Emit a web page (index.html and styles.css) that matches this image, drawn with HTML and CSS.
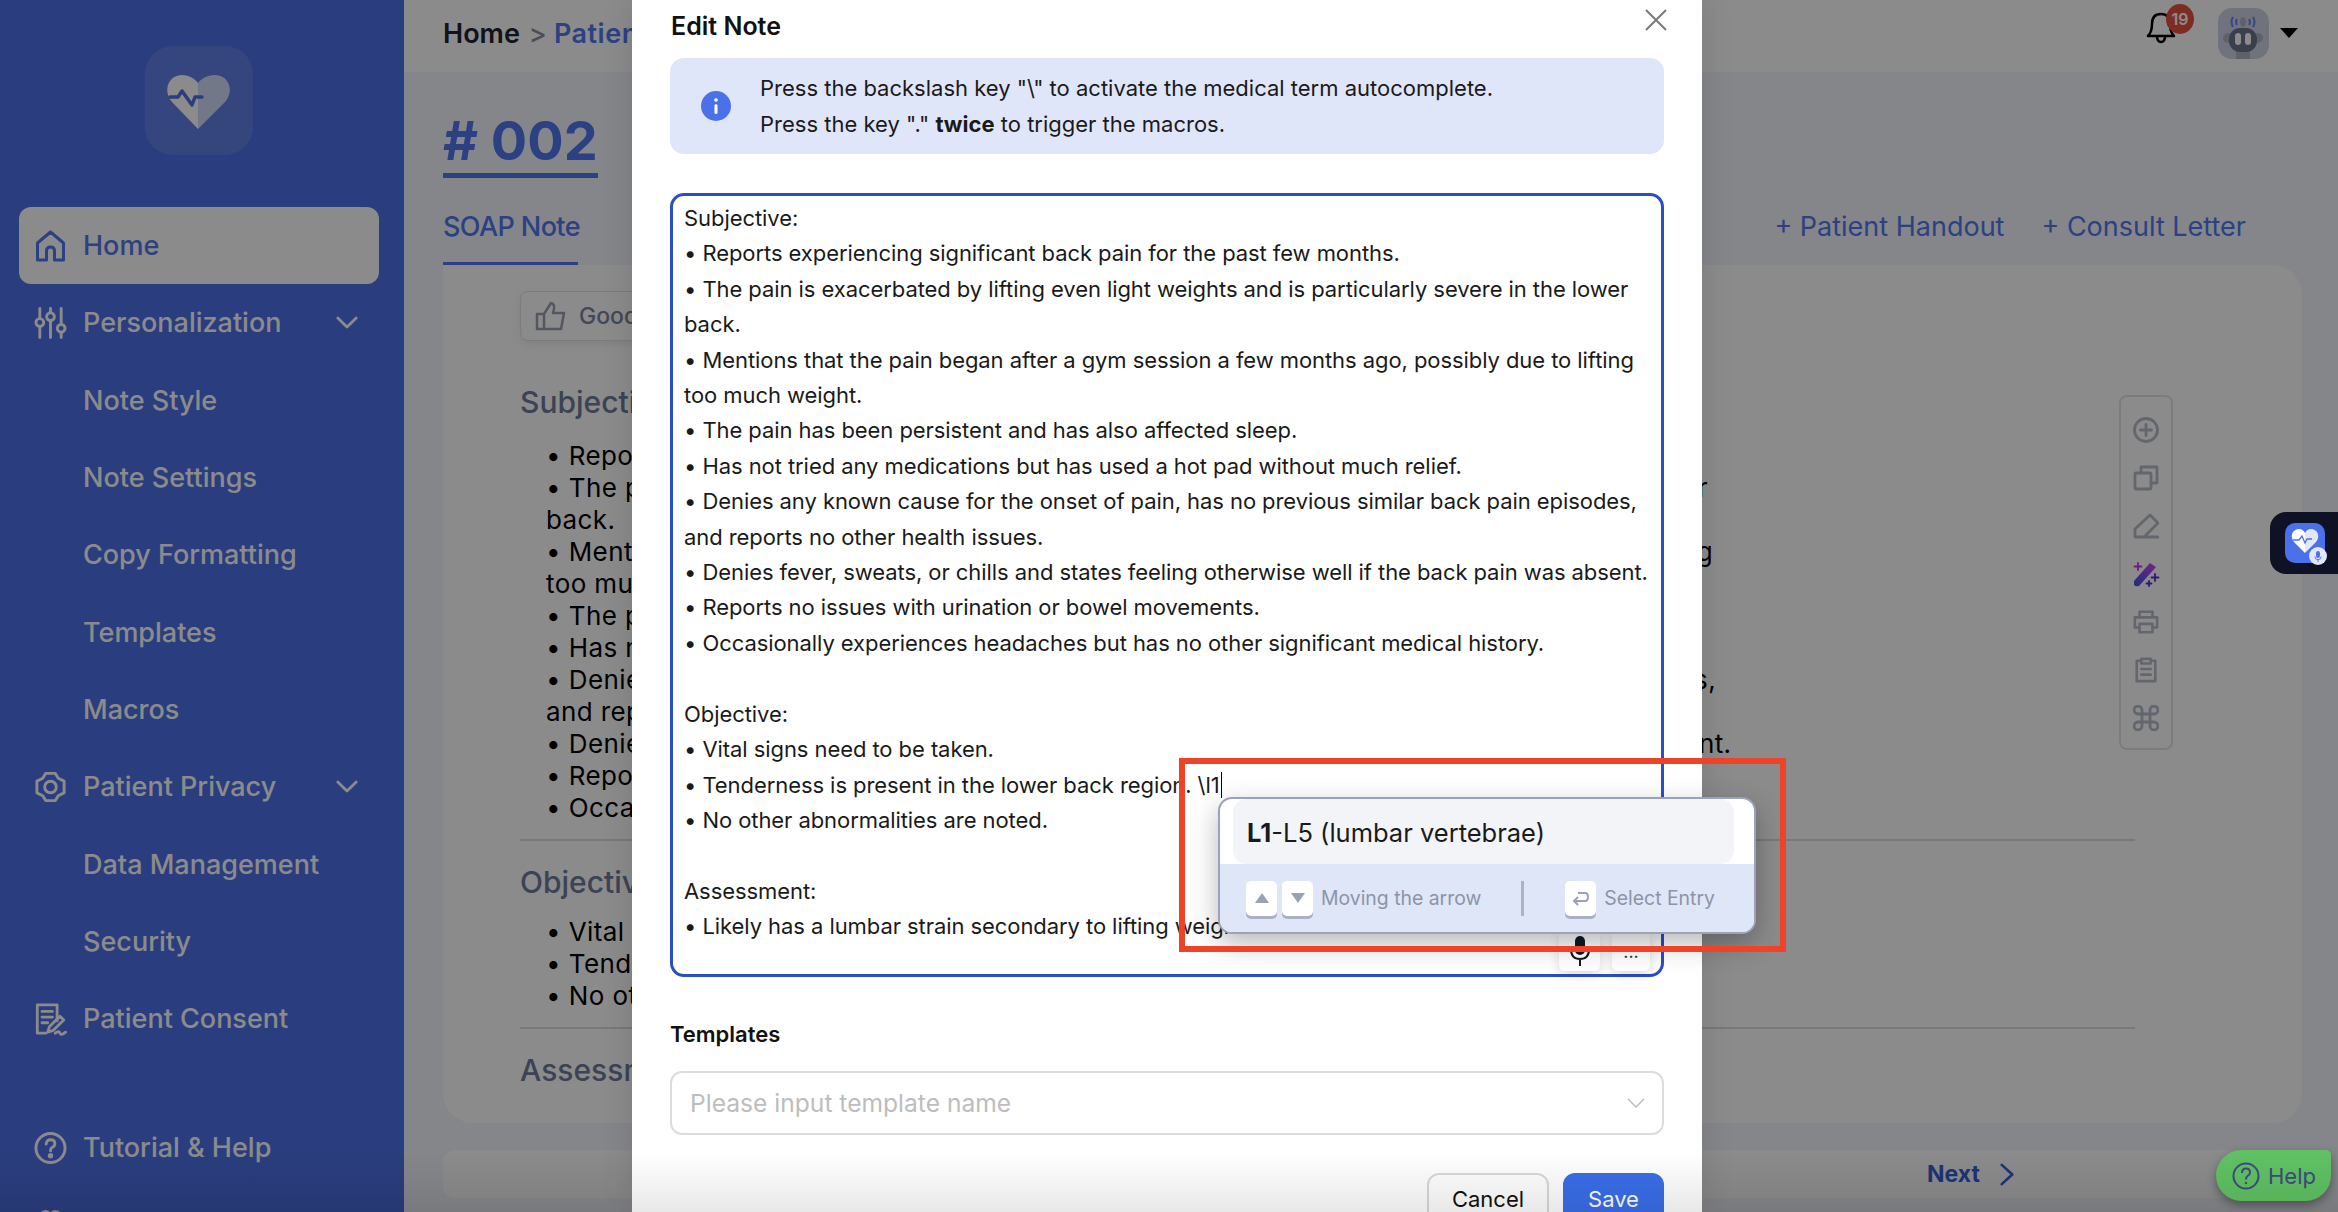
FILE: index.html
```html
<!DOCTYPE html>
<html lang="en">
<head>
<meta charset="utf-8">
<title>Edit Note</title>
<link rel="stylesheet" href="styles.css">
</head>
<body>
<div class="app">
  <aside class="sidebar">
    <div class="logo">
      <svg viewBox="0 0 108 108" width="108" height="108">
        <path fill="#fff" d="M53 83 L27 56 C17 44 24 29 37 29 C44 29 50 33 53 37 Z"/>
        <path fill="#fff" opacity=".72" d="M53 83 L80 56 C90 44 83 29 70 29 C62 29 56 33 53 37 Z"/>
        <path fill="none" stroke="#4d70e8" stroke-width="3.500" stroke-linejoin="round" stroke-linecap="round" d="M25 51 H33 L37 45 L47 59 L50 51 H57"/>
      </svg>
    </div>
    <nav class="nav">
      <a class="nav-item active">
        <svg class="nav-icon" viewBox="0 0 32 34"><path d="M3 14 L16 3 L29 14 V31 H20 V22 Q20 18 16 18 Q12 18 12 22 V31 H3 Z"/></svg>
        <span>Home</span>
      </a>
      <a class="nav-item">
        <svg class="nav-icon" viewBox="0 0 34 34"><path d="M6 2 V12 M6 21 V32 M17 2 V6 M17 15 V32 M28 2 V18 M28 27 V32"/><circle cx="6" cy="16.500" r="4"/><circle cx="17" cy="10.500" r="4"/><circle cx="28" cy="22.500" r="4"/></svg>
        <span class="nav-label">Personalization</span>
        <svg class="chev" viewBox="0 0 24 14"><path d="M2 2 L12 12 L22 2"/></svg>
      </a>
      <a class="nav-item sub">Note Style</a>
      <a class="nav-item sub">Note Settings</a>
      <a class="nav-item sub">Copy Formatting</a>
      <a class="nav-item sub">Templates</a>
      <a class="nav-item sub">Macros</a>
      <a class="nav-item">
        <svg class="nav-icon" viewBox="0 0 34 34"><path d="M12 3 H22 L25 8 L31 11 V23 L25 26 L22 31 H12 L9 26 L3 23 V11 L9 8 Z" stroke-linejoin="round"/><circle cx="17" cy="17" r="6"/></svg>
        <span class="nav-label">Patient Privacy</span>
        <svg class="chev" viewBox="0 0 24 14"><path d="M2 2 L12 12 L22 2"/></svg>
      </a>
      <a class="nav-item sub">Data Management</a>
      <a class="nav-item sub">Security</a>
      <a class="nav-item">
        <svg class="nav-icon" viewBox="0 0 34 36"><path d="M24 20 V3 H3 V33 H12 M8 10 H19 M8 16 H19 M8 22 H14"/><path d="M14 32 L16 26 L27 15 L31 19 L20 30 Z M22 33 Q26 30 27 33 T33 32"/></svg>
        <span>Patient Consent</span>
      </a>
      <a class="nav-item tutorial">
        <svg class="nav-icon" viewBox="0 0 34 34"><circle cx="17" cy="17" r="15"/><path d="M12.500 13 Q13 8.500 17 8.500 Q21.500 8.500 21.500 12.500 Q21.500 15 18.500 16.500 Q17 17.500 17 20"/><circle class="dot" cx="17" cy="25" r="1.300"/></svg>
        <span>Tutorial &amp; Help</span>
      </a>
      <a class="nav-item">
        <svg class="nav-icon" viewBox="0 0 34 34"><circle cx="12" cy="8" r="5"/><circle cx="22" cy="8" r="5"/><path d="M4 30 Q4 18 17 18 Q30 18 30 30"/></svg>
        <span>Referral</span>
      </a>
    </nav>
  </aside>

  <main class="main">
    <header class="topbar">
      <div class="crumbs"><span class="crumb-home">Home</span><span class="crumb-sep">&gt;</span><span class="crumb-cur">Patient Notes</span></div>
      <div class="top-actions">
        <div class="bell">
          <svg viewBox="0 0 32 34" width="32" height="34"><path d="M3 26 Q7 22 7 14 Q7 4 16 4 Q25 4 25 14 Q25 22 29 26 Z M12 26 Q12 32 16 32 Q20 32 20 26"/></svg>
          <span class="bell-count">19</span>
        </div>
        <div class="avatar">
          <svg viewBox="0 0 50 51" width="50" height="51">
            <path d="M15 9 Q12 14 15 19 M19 11 Q17 14 19 17 M35 9 Q38 14 35 19 M31 11 Q33 14 31 17" fill="none" stroke="#5b86ff" stroke-width="2"/>
            <ellipse cx="25" cy="14" rx="3" ry="5" fill="#aeb3c0"/>
            <rect x="18" y="42" width="14" height="9" fill="#aeb3c0"/>
            <circle cx="10" cy="30" r="5" fill="#aeb3c0"/><circle cx="40" cy="30" r="5" fill="#aeb3c0"/>
            <rect x="11" y="20" width="28" height="24" rx="11" fill="#6b7590"/>
            <rect x="17" y="25" width="6" height="12" rx="3" fill="#fff"/><rect x="27" y="25" width="6" height="12" rx="3" fill="#fff"/>
          </svg>
        </div>
        <span class="caret"></span>
      </div>
    </header>

    <div class="content">
      <h1 class="doc-id"># 002</h1>
      <div class="tabs">
        <span class="tab active">SOAP Note</span>
        <span class="tab-add">+ Patient Handout</span>
        <span class="tab-add">+ Consult Letter</span>
      </div>
      <section class="card">
        <div class="rate">
          <svg viewBox="0 0 32 30" width="32" height="30"><path d="M9 13 H2 V28 H9 Z M9 13 L16 2 Q20 3 19 8 L18 12 H29 L26 28 H9"/></svg>
          <span>Good note</span>
        </div>
        <h2 class="sec-title first">Subjective</h2>
        <div class="sec-body lead">• Reports experiencing significant back pain for the past few months.<br>• The pain is exacerbated by lifting even light weights and is particularly severe in the lower<br>back.<br>• Mentions that the pain began after a gym session a few months ago, possibly due to lifting<br>too much weight.<br>• The pain has been persistent and has also affected sleep.<br>• Has not tried any medications but has used a hot pad without much relief.<br>• Denies any known cause for the onset of pain, has no previous similar back pain episodes,<br>and reports no other health issues.<br>• Denies fever, sweats, or chills and states feeling otherwise well if the back pain was absent.<br>• Reports no issues with urination or bowel movements.<br>• Occasionally experiences headaches but has no other significant medical history.</div>
        <hr class="sec-rule">
        <h2 class="sec-title">Objective</h2>
        <div class="sec-body">• Vital signs need to be taken.<br>• Tenderness is present in the lower back region.<br>• No other abnormalities are noted.</div>
        <hr class="sec-rule">
        <h2 class="sec-title">Assessment</h2>
        <div class="toolbar">
          <svg viewBox="0 0 26 26"><circle cx="13" cy="13" r="11.500"/><path d="M13 7.500 V18.500 M7.500 13 H18.500"/></svg>
          <svg viewBox="0 0 26 26"><rect x="2" y="8" width="16" height="16" rx="1"/><path d="M8 8 V2 H24 V18 H18"/></svg>
          <svg viewBox="0 0 26 26"><path d="M2 24 V16 L17 2 L25 10 L11 24 H25 M2 24 H11"/></svg>
          <svg viewBox="0 0 28 26" class="wand"><defs><linearGradient id="wg" x1="0" y1="1" x2="1" y2="0"><stop offset="0" stop-color="#3b52e8"/><stop offset="1" stop-color="#e040ff"/></linearGradient></defs><path fill="url(#wg)" stroke="none" d="M2 20 L18 2 L24 6 L7 25 Q4 26 2 24 Z"/><path stroke="#b93be0" d="M6 2 V9 M2.500 5.500 H9.500"/><path stroke="#5a2bd8" d="M23 13 V20 M19.500 16.500 H26.500 M17 20 V25 M14.500 22.500 H19.500"/></svg>
          <svg viewBox="0 0 28 26"><path d="M7 8 V2 H21 V8 M7 19 H2 V8 H26 V19 H21"/><rect x="7" y="15" width="14" height="9"/></svg>
          <svg viewBox="0 0 26 28"><path d="M8 4 H3 V26 H23 V4 H18 M8 2 H18 V7 H8 Z M8 13 H18 M8 19 H18"/></svg>
          <svg viewBox="0 0 26 26"><path d="M9 9 V5 A4 4 0 1 0 5 9 H21 A4 4 0 1 0 17 5 V21 A4 4 0 1 0 21 17 H5 A4 4 0 1 0 9 21 Z"/></svg>
        </div>
      </section>
      <div class="pager"><span class="pager-next">Next</span><svg viewBox="0 0 16 26" width="14" height="25"><path d="M2 2 L14 13 L2 24"/></svg></div>
    </div>
  </main>
</div>

<div class="mask"></div>

<div class="modal">
  <div class="modal-head">
    <span class="modal-title">Edit Note</span>
    <svg class="modal-close" viewBox="0 0 22 22" width="22" height="22"><path d="M1 1 L21 21 M21 1 L1 21"/></svg>
  </div>
  <div class="alert">
    <svg class="alert-icon" viewBox="0 0 30 30" width="30" height="30"><circle cx="15" cy="15" r="15" fill="#4a70ea"/><circle cx="15" cy="9" r="1.800" fill="#fff"/><rect x="13.500" y="13" width="3" height="10" rx="1.500" fill="#fff"/></svg>
    <div class="alert-text">Press the backslash key "\" to activate the medical term autocomplete.<br>Press the key "." <b>twice</b> to trigger the macros.</div>
  </div>
  <div class="editor">
    <div class="editor-text">Subjective:<br>• Reports experiencing significant back pain for the past few months.<br>• The pain is exacerbated by lifting even light weights and is particularly severe in the lower<br>back.<br>• Mentions that the pain began after a gym session a few months ago, possibly due to lifting<br>too much weight.<br>• The pain has been persistent and has also affected sleep.<br>• Has not tried any medications but has used a hot pad without much relief.<br>• Denies any known cause for the onset of pain, has no previous similar back pain episodes,<br>and reports no other health issues.<br>• Denies fever, sweats, or chills and states feeling otherwise well if the back pain was absent.<br>• Reports no issues with urination or bowel movements.<br>• Occasionally experiences headaches but has no other significant medical history.<br><br>Objective:<br>• Vital signs need to be taken.<br>• Tenderness is present in the lower back region. <span class="caret-text">\l1</span><br>• No other abnormalities are noted.<br><br>Assessment:<br>• Likely has a lumbar strain secondary to lifting weights</div>
    <div class="editor-tools">
      <span class="tool-btn"><svg viewBox="0 0 22 32" width="22" height="32"><rect x="6" y="1" width="10" height="19" rx="5" fill="#111827"/><path d="M2 14 Q2 24 11 24 Q20 24 20 14 M11 24 V31" fill="none" stroke="#111827" stroke-width="2"/></svg></span>
      <span class="tool-btn dots">...</span>
    </div>
  </div>
  <div class="field-label">Templates</div>
  <div class="select">
    <span>Please input template name</span>
    <svg viewBox="0 0 18 10" width="18" height="10"><path d="M1 1 L9 9 L17 1"/></svg>
  </div>
  <div class="modal-actions">
    <span class="btn">Cancel</span>
    <span class="btn primary">Save</span>
  </div>
</div>

<div class="popup">
  <div class="popup-row"><b>L1</b>-L5 (lumbar vertebrae)</div>
  <div class="popup-foot">
    <span class="key"><svg viewBox="0 0 14 10" width="14" height="10"><path d="M7 0 L14 10 H0 Z"/></svg></span>
    <span class="key"><svg viewBox="0 0 14 10" width="14" height="10"><path d="M0 0 H14 L7 10 Z"/></svg></span>
    <span class="hint">Moving the arrow</span>
    <span class="foot-sep"></span>
    <span class="key"><svg class="enter" viewBox="0 0 18 16" width="18" height="16"><path d="M6 3 H13 Q16 3 16 7 Q16 11 13 11 H2 M6 7 L2 11 L6 15"/></svg></span>
    <span class="hint">Select Entry</span>
  </div>
</div>
<div class="callout"></div>

<div class="widget">
  <div class="widget-icon">
    <svg viewBox="0 0 40 40" width="40" height="40"><path fill="#fff" d="M20 30 L9 19 C4 13 8 6 14 6 C17 6 19 8 20 10 Z"/><path fill="#e2e8fb" d="M20 30 L31 19 C36 13 32 6 26 6 C23 6 21 8 20 10 Z"/><path fill="none" stroke="#4a70ea" stroke-width="1.300" d="M8 17 H14 L17 13 L20 20 L22 16 H27"/></svg>
    <span class="widget-badge"><svg viewBox="0 0 10 14" width="10" height="14"><rect x="2.500" y="0" width="5" height="9" rx="2.500" fill="#4a70ea"/><path d="M1 7 Q1 11 5 11 Q9 11 9 7 M5 11 V14" fill="none" stroke="#4a70ea" stroke-width="1.200"/></svg></span>
  </div>
</div>

<div class="help">
  <svg viewBox="0 0 28 28" width="28" height="28"><circle cx="14" cy="14" r="12.500"/><path d="M10 11 Q10 6.500 14 6.500 Q18 6.500 18 10.500 Q18 12.500 15.500 14 Q14 15 14 17.500"/><circle class="dot" cx="14" cy="21" r="1.200"/></svg>
  <span>Help</span>
</div>
<div class="bottom-fade"></div>
</body>
</html>
```

FILE: styles.css
```css
* { box-sizing: border-box; }
html, body { margin: 0; height: 100%; }
body {
  position: relative;
  width: 2338px;
  height: 1212px;
  overflow: hidden;
  font-family: Inter, "Liberation Sans", sans-serif;
  color: #000;
}
h1, h2 { margin: 0; }

/* page behind the dialog */
.app { display: flex; height: 1212px; overflow: hidden; }
.sidebar { flex: 0 0 404px; background: #4d70e8; overflow: hidden; }
.logo { width: 108px; height: 109px; margin: 46px 0 52px 145px; border-radius: 28px; background: rgba(255,255,255,.12); }
.logo svg { display: block; }
.nav { display: flex; flex-direction: column; }
.nav-item {
  display: flex;
  align-items: center;
  flex: 0 0 77.300px;
  height: 77.300px;
  margin: 0 25px 0 19px;
  padding-left: 15px;
  gap: 16px;
  font-size: 27px;
  font-weight: 500;
  color: #fff;
  border-radius: 12px;
}
.nav-item.sub { padding-left: 64px; }
.nav-item.active { background: #fff; color: #4f78f0; }
.nav-item.tutorial { margin-top: 52px; }
.nav-icon { width: 33px; height: 34px; flex: none; fill: none; stroke: currentColor; stroke-width: 3; stroke-linecap: round; stroke-linejoin: round; }
.nav-icon .dot { fill: currentColor; }
.nav-label { flex: 1; }
.chev { width: 22px; height: 13px; margin-right: 21px; fill: none; stroke: currentColor; stroke-width: 3; stroke-linecap: round; stroke-linejoin: round; }

.main { flex: 1; min-width: 0; background: #f4f6fd; display: flex; flex-direction: column; }
.topbar { flex: 0 0 72px; background: #fff; display: flex; align-items: center; justify-content: space-between; padding: 0 40px 6px 39px; }
.crumbs { display: flex; align-items: center; font-size: 27px; font-weight: 600; white-space: nowrap; }
.crumb-home { color: #1f2430; }
.crumb-sep { color: #8a8f9c; margin: 0 7px 0 9px; font-weight: 500; }
.crumb-cur { color: #4f78f0; letter-spacing: .5px; }
.top-actions { display: flex; align-items: center; }
.bell { position: relative; width: 32px; height: 34px; margin: -12px 41px 0 0; }
.bell svg { display: block; fill: none; stroke: #000; stroke-width: 2.500; stroke-linejoin: round; }
.bell-count { position: absolute; left: 21px; top: -6px; width: 28px; height: 30px; border-radius: 50%; background: #e8503e; color: #fff; font-size: 16px; font-weight: 600; display: flex; align-items: center; justify-content: center; }
.avatar { width: 51px; height: 51px; border-radius: 14px; background: #ced4e4; overflow: hidden; margin-right: 11px; }
.avatar svg { display: block; }
.caret { width: 0; height: 0; border-left: 9px solid transparent; border-right: 9px solid transparent; border-top: 10px solid #000; }

.content { flex: 1; padding: 0 36px 0 39px; display: flex; flex-direction: column; }
.doc-id { align-self: flex-start; margin-top: 36px; height: 70px; font-size: 54px; line-height: 66px; font-weight: 700; color: #4f78f0; border-bottom: 5px solid #4f78f0; }
.tabs { display: flex; align-items: flex-start; height: 87px; padding-top: 21px; font-size: 27px; }
.tab.active { color: #4f78f0; font-weight: 500; height: 66px; line-height: 56px; border-bottom: 3px solid #4f78f0; width: 135px; white-space: nowrap; letter-spacing: -.6px; }
.tab-add { color: #4f78f0; font-weight: 400; line-height: 56px; white-space: nowrap; }
.tab.active + .tab-add { margin-left: auto; }
.tab-add + .tab-add { margin-left: 37px; margin-right: 56px; }
.card { position: relative; height: 858px; background: #fff; border-radius: 0 30px 30px 30px; padding: 26px 170px 0 77px; }
.rate { display: flex; align-items: center; gap: 12px; width: 220px; height: 50px; padding-left: 14px; border: 1.500px solid #dfe2ea; border-radius: 8px; box-shadow: 0 3px 8px rgba(0,0,0,.08); font-size: 23px; font-weight: 500; color: #7c8599; white-space: nowrap; }
.rate svg { fill: none; stroke: #99a0b0; stroke-width: 2.500; stroke-linejoin: round; flex: none; }
.sec-title { font-size: 30px; line-height: 40px; font-weight: 500; color: #6e7b9a; }
.sec-title.first { margin-top: 41px; }
.sec-body { margin: 14px 0 0 26px; font-size: 26px; letter-spacing: .4px; line-height: 32px; white-space: nowrap; color: #000; }
.sec-body.lead { margin-top: 18px; }
.sec-rule { border: 0; border-top: 2px solid #d9dce4; margin: 15px 0 0; width: 1615px; }
.sec-rule + .sec-title { margin-top: 21px; }
.toolbar { position: absolute; left: 1676px; top: 130px; width: 54px; height: 355px; padding-top: 20px; border: 2px solid #e2e4ea; border-radius: 8px; display: flex; flex-direction: column; align-items: center; gap: 22px; }
.toolbar svg { width: 26px; height: 26px; flex: none; fill: none; stroke: #b6bbc8; stroke-width: 2.800; stroke-linejoin: round; stroke-linecap: round; }
.toolbar .wand { width: 30px; stroke-width: 1.800; }
.pager { height: 48px; margin-top: 27px; width: 1859px; background: #fff; border-radius: 12px; display: flex; align-items: center; padding-left: 1484px; gap: 20px; }
.pager-next { font-size: 23px; font-weight: 700; color: #365fd8; }
.pager svg { fill: none; stroke: #365fd8; stroke-width: 3; stroke-linecap: round; stroke-linejoin: round; }

.mask { position: absolute; inset: 0; background: rgba(0,0,0,.455); }

/* dialog */
.modal { position: absolute; left: 632px; top: 0; width: 1070px; height: 1212px; background: #fff; padding: 0 38px; overflow: hidden; box-shadow: 0 0 30px rgba(0,0,0,.12); }
.modal-head { display: flex; justify-content: space-between; height: 58px; padding: 9px 0 0 1px; }
.modal-title { font-size: 25px; line-height: 34px; font-weight: 600; color: #111; }
.modal-close { margin-right: -3px; fill: none; stroke: #7a7a7a; stroke-width: 2; }
.alert { display: flex; align-items: center; height: 96px; padding-left: 31px; gap: 29px; background: #e0e6fa; border-radius: 14px; }
.alert-icon { flex: none; }
.alert-text { font-size: 22px; line-height: 36px; color: #1a1a1a; white-space: nowrap; }
.alert-text b { font-weight: 700; }
.editor { position: relative; margin-top: 39px; height: 784px; border: 3px solid #2a4fc4; border-radius: 14px; padding: 5px 11px 0; }
.editor-text { font-size: 22px; letter-spacing: -.07px; line-height: 35.400px; color: #1a1a1a; white-space: nowrap; }
.caret-text { border-right: 1.500px solid #000; padding-right: 1px; }
.editor-tools { position: absolute; right: 11px; bottom: 3px; display: flex; gap: 12px; }
.tool-btn { width: 41px; height: 40px; border-radius: 6px; background: #fff; box-shadow: 0 4px 12px rgba(0,0,0,.14); display: flex; align-items: center; justify-content: center; }
.tool-btn.dots { width: 38px; font-size: 18px; color: #333; }
.field-label { margin-top: 40px; font-size: 22px; line-height: 34px; font-weight: 600; color: #111; }
.select { margin-top: 20px; height: 64px; border: 2px solid #dcdcdc; border-radius: 12px; display: flex; align-items: center; justify-content: space-between; padding: 0 17px 0 18px; font-size: 24.600px; color: #bdbdbd; }
.select svg { fill: none; stroke: #bdbdbd; stroke-width: 1.500; }
.modal-actions { display: flex; justify-content: flex-end; gap: 14px; margin-top: 38px; }
.btn { display: flex; align-items: center; justify-content: center; width: 122px; height: 52px; border: 2px solid #d9d9d9; border-radius: 12px; font-size: 22px; color: #111; background: #fff; }
.btn.primary { width: 101px; background: #3a6ee8; border-color: #3a6ee8; color: #fff; }

/* autocomplete */
.popup { position: absolute; left: 1218px; top: 797px; width: 538px; height: 137px; background: #fff; border: 2px solid #9aa3b8; border-radius: 14px; overflow: hidden; box-shadow: 0 10px 28px rgba(0,0,0,.28); display: flex; flex-direction: column; }
.popup-row { flex: 0 0 65px; margin: 0 20px 0 13px; padding: 2px 0 0 14px; display: flex; align-items: center; white-space: pre; background: #f3f4f8; border-radius: 14px; font-size: 25.500px; color: #1a1a1a; }
.popup-row b { font-weight: 700; }
.popup-foot { flex: 1; background: #dfe6f8; display: flex; align-items: center; padding-left: 26px; font-size: 19.400px; color: #8c94a8; }
.key { flex: none; width: 31px; height: 35px; margin-right: 5px; background: #fff; border-radius: 5px; box-shadow: 0 3px 0 #aab1c2; display: flex; align-items: center; justify-content: center; }
.key svg { fill: #9aa2b4; }
.key .enter { fill: none; stroke: #9aa2b4; stroke-width: 2; }
.hint { white-space: nowrap; margin-left: 3px; }
.foot-sep { width: 3px; height: 35px; margin: 0 41px 0 40px; background: #aab3c8; }
.callout { position: absolute; left: 1179px; top: 758px; width: 607px; height: 194px; border: 6px solid #ee4326; }

/* floating */
.widget { position: absolute; left: 2270px; top: 512px; width: 68px; height: 62px; background: #0f1224; border-radius: 16px 0 0 16px; padding: 11px 0 0 15px; }
.widget-icon { position: relative; width: 40px; height: 40px; background: #4a70ea; border-radius: 10px; }
.widget-icon svg { display: block; }
.widget-badge { position: absolute; right: -2px; bottom: -2px; width: 18px; height: 18px; border-radius: 50%; background: #e2e8fb; display: flex; align-items: center; justify-content: center; }
.widget-badge svg { width: 8px; height: 11px; }
.help { position: absolute; left: 2216px; top: 1150px; width: 115px; height: 51px; background: #5fc163; border-radius: 26px 5px 26px 26px; display: flex; align-items: center; padding-left: 16px; gap: 8px; font-size: 22px; color: #3f4a80; box-shadow: 0 4px 10px rgba(0,0,0,.35); }
.help svg { fill: none; stroke: #3f4a80; stroke-width: 2; flex: none; }
.help .dot { fill: #3f4a80; stroke: none; }
.bottom-fade { position: absolute; left: 0; right: 0; bottom: 0; height: 60px; background: linear-gradient(rgba(0,0,0,0), rgba(0,0,0,.09)); }
```
